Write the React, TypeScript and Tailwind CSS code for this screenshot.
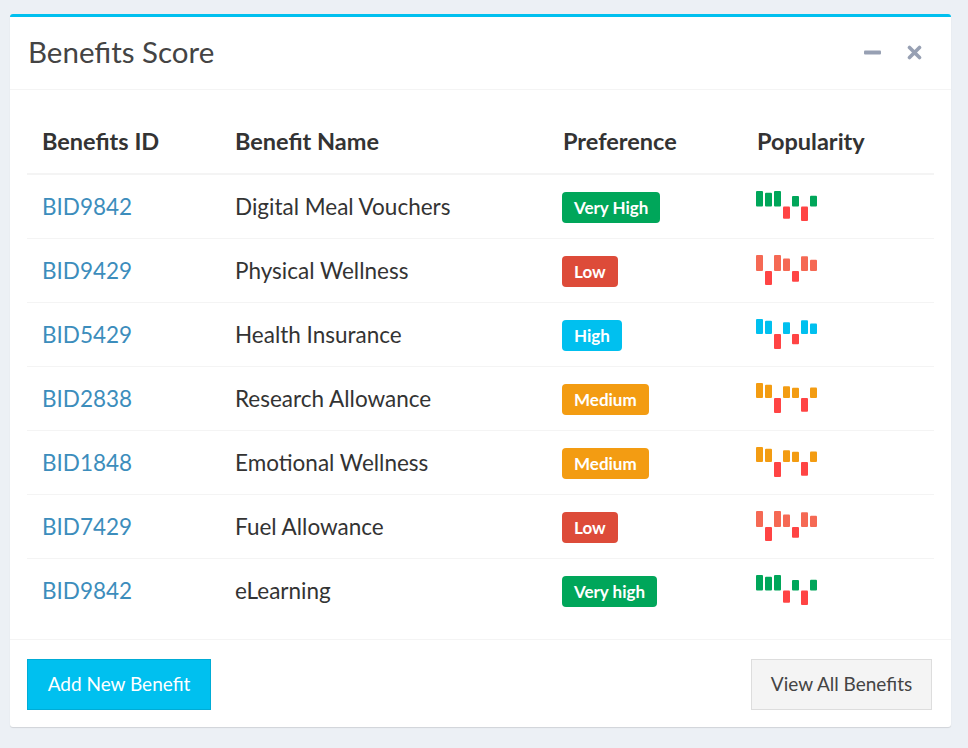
import React from "react";

type Row = {
  id: string;
  name: string;
  pref: string;
  badge: string;
  bar: string;
  data: number[];
};

const A = [90, 80, 90, -70, 61, -83, 63];
const B = [90, -80, 90, 70, -61, 83, 63];
const C = [90, 80, -90, 70, -61, 83, 63];
const D = [90, 80, -90, 70, 61, -83, 63];

const rows: Row[] = [
  { id: "BID9842", name: "Digital Meal Vouchers", pref: "Very High", badge: "bg-[#00a65a]", bar: "#00a65a", data: A },
  { id: "BID9429", name: "Physical Wellness", pref: "Low", badge: "bg-[#dd4b39]", bar: "#f56954", data: B },
  { id: "BID5429", name: "Health Insurance", pref: "High", badge: "bg-[#00c0ef]", bar: "#00c0ef", data: C },
  { id: "BID2838", name: "Research Allowance", pref: "Medium", badge: "bg-[#f39c12]", bar: "#f39c12", data: D },
  { id: "BID1848", name: "Emotional Wellness", pref: "Medium", badge: "bg-[#f39c12]", bar: "#f39c12", data: D },
  { id: "BID7429", name: "Fuel Allowance", pref: "Low", badge: "bg-[#dd4b39]", bar: "#f56954", data: B },
  { id: "BID9842", name: "eLearning", pref: "Very high", badge: "bg-[#00a65a]", bar: "#00a65a", data: A },
];

function Sparkbar({ data, color }: { data: number[]; color: string }) {
  const h = 30;
  const max = Math.max(...data);
  const min = Math.min(...data);
  const range = max - min;
  const zero = (max / range) * h;
  return (
    <svg width="63" height={h} viewBox={`0 0 63 ${h}`} className="block">
      {data.map((v, i) => {
        const bh = (Math.abs(v) / range) * h;
        const y = v >= 0 ? zero - bh : zero;
        return <rect key={i} x={i * 9 + 1} y={y} width="7" height={bh} rx="1" fill={v >= 0 ? color : "#f44"} />;
      })}
    </svg>
  );
}

export default function App() {
  return (
    <div className="min-h-screen bg-[#ecf0f5] pl-[10px] pr-[17px] pt-[14px] font-['Lato',sans-serif] text-[#333]">
      <div className="rounded-[3px] border-t-[3px] border-[#00c0ef] bg-white shadow-[0_1px_1px_rgba(0,0,0,0.12)]">
        <div className="flex h-[73px] items-center justify-between border-b border-[#f4f4f4] pb-[3px] pl-[18px] pr-[29px]">
          <h3 className="text-[29.5px] leading-none text-[#444]">Benefits Score</h3>
          <div className="flex items-center gap-[26px] pt-[2px]">
            <svg width="17" height="5" viewBox="0 0 17 5">
              <rect x="0" y="0.5" width="17" height="4" rx="1" fill="#97a0b3" />
            </svg>
            <svg width="15" height="15" viewBox="0 0 15 15">
              <path d="M2.5 2.5 L12.5 12.5 M12.5 2.5 L2.5 12.5" stroke="#97a0b3" strokeWidth="3.6" strokeLinecap="round" />
            </svg>
          </div>
        </div>
        <div className="px-[17px] pb-[17px] pt-[17px]">
          <table className="w-full table-fixed border-collapse text-[22.5px]">
            <colgroup>
              <col className="w-[193px]" />
              <col className="w-[328px]" />
              <col className="w-[194px]" />
              <col />
            </colgroup>
            <thead>
              <tr className="h-[67px] border-b-2 border-[#f4f4f4] text-left text-[23.5px]">
                <th className="px-[15px] pt-[3px] font-bold">Benefits ID</th>
                <th className="px-[15px] pt-[3px] font-bold">Benefit Name</th>
                <th className="px-[15px] pt-[3px] font-bold">Preference</th>
                <th className="px-[15px] pt-[3px] font-bold">Popularity</th>
              </tr>
            </thead>
            <tbody>
              {rows.map((r, i) => (
                <tr key={i} className={`h-[64px] ${i < rows.length - 1 ? "border-b border-[#f4f4f4]" : ""}`}>
                  <td className="px-[15px] pt-[1px]">
                    <a className="text-[#3c8dbc]">{r.id}</a>
                  </td>
                  <td className="px-[15px] pt-[1px]">{r.name}</td>
                  <td className="px-[14px]">
                    <span className={`inline-block rounded-[4px] px-[12px] py-[5px] text-[17px] font-bold leading-[21px] text-white ${r.badge}`}>
                      {r.pref}
                    </span>
                  </td>
                  <td className="px-[13px]">
                    <Sparkbar data={r.data} color={r.bar} />
                  </td>
                </tr>
              ))}
            </tbody>
          </table>
        </div>
        <div className="flex items-center justify-between border-t border-[#f4f4f4] pb-[17px] pl-[17px] pr-[19px] pt-[19px]">
          <button className="h-[51px] w-[184px] border border-[#00acd6] bg-[#00c0ef] text-[19px] text-white">Add New Benefit</button>
          <button className="h-[51px] w-[181px] border border-[#ddd] bg-[#f4f4f4] text-[19px] text-[#444]">View All Benefits</button>
        </div>
      </div>
    </div>
  );
}
